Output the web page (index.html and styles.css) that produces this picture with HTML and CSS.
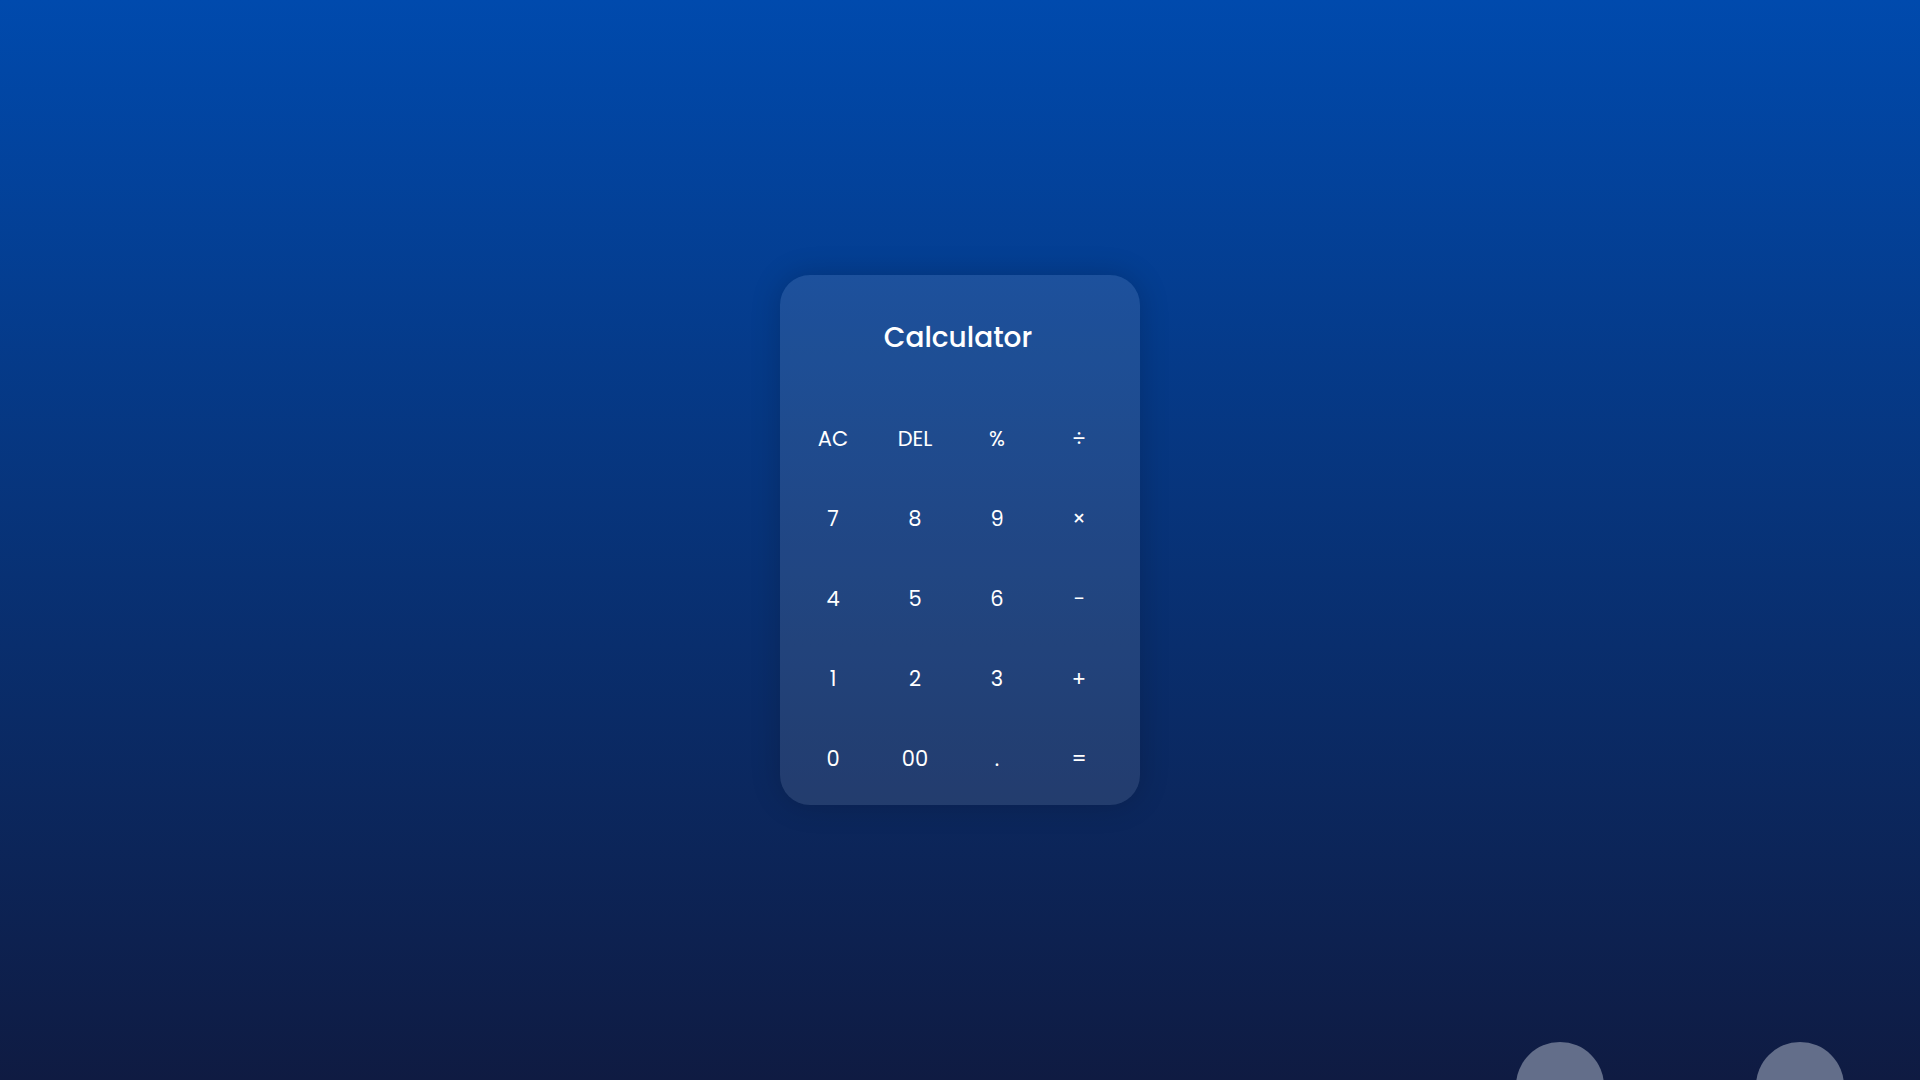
FILE: index.html
```html
<!DOCTYPE html>
<html lang="en">
<head>
<meta charset="utf-8">
<title>Calculator</title>
<link rel="stylesheet" href="styles.css">
</head>
<body>
<main class="page">
  <section class="calc">
    <h1 class="title">Calculator</h1>
    <div class="keys">
      <button class="key">AC</button>
      <button class="key">DEL</button>
      <button class="key">%</button>
      <button class="key">÷</button>
      <button class="key">7</button>
      <button class="key">8</button>
      <button class="key">9</button>
      <button class="key">×</button>
      <button class="key">4</button>
      <button class="key">5</button>
      <button class="key">6</button>
      <button class="key">−</button>
      <button class="key">1</button>
      <button class="key">2</button>
      <button class="key">3</button>
      <button class="key">+</button>
      <button class="key">0</button>
      <button class="key">00</button>
      <button class="key">.</button>
      <button class="key">=</button>
    </div>
  </section>
  <div class="bubble bubble-a"></div>
  <div class="bubble bubble-b"></div>
</main>
</body>
</html>
```

FILE: styles.css
```css
html, body {
  margin: 0;
  padding: 0;
  height: 100%;
}

body {
  font-family: "Poppins", "Inter", "Noto Sans", sans-serif;
  background: linear-gradient(180deg, #004aad 0%, #0f1b42 100%);
  overflow: hidden;
  color: #ffffff;
}

.page {
  position: relative;
  height: 1080px;
  display: flex;
  justify-content: center;
  align-items: flex-start;
}

.calc {
  margin-top: 275px;
  width: 360px;
  height: 530px;
  box-sizing: border-box;
  padding: 43px 26px 0 18px;
  border-radius: 30px;
  background: rgba(255, 255, 255, 0.1);
  box-shadow: 0 0 30px rgba(0, 0, 0, 0.18);
  display: flex;
  flex-direction: column;
  align-items: center;
}

.title {
  margin: 0 0 0 4px;
  height: 40px;
  line-height: 40px;
  font-size: 28px;
  font-weight: 500;
  letter-spacing: 0;
}

.keys {
  margin-top: 50px;
  display: grid;
  grid-template-columns: repeat(4, 70px);
  grid-auto-rows: 60px;
  column-gap: 12px;
  row-gap: 20px;
}

.key {
  border: none;
  background: transparent;
  color: #ffffff;
  font-family: inherit;
  font-size: 21px;
  font-weight: 400;
  padding: 0;
  display: flex;
  align-items: center;
  justify-content: center;
}

.bubble {
  position: absolute;
  top: 1042px;
  width: 88px;
  height: 88px;
  border-radius: 50%;
  background: #636e8a;
}

.bubble-a {
  left: 1516px;
}

.bubble-b {
  left: 1756px;
}
```
